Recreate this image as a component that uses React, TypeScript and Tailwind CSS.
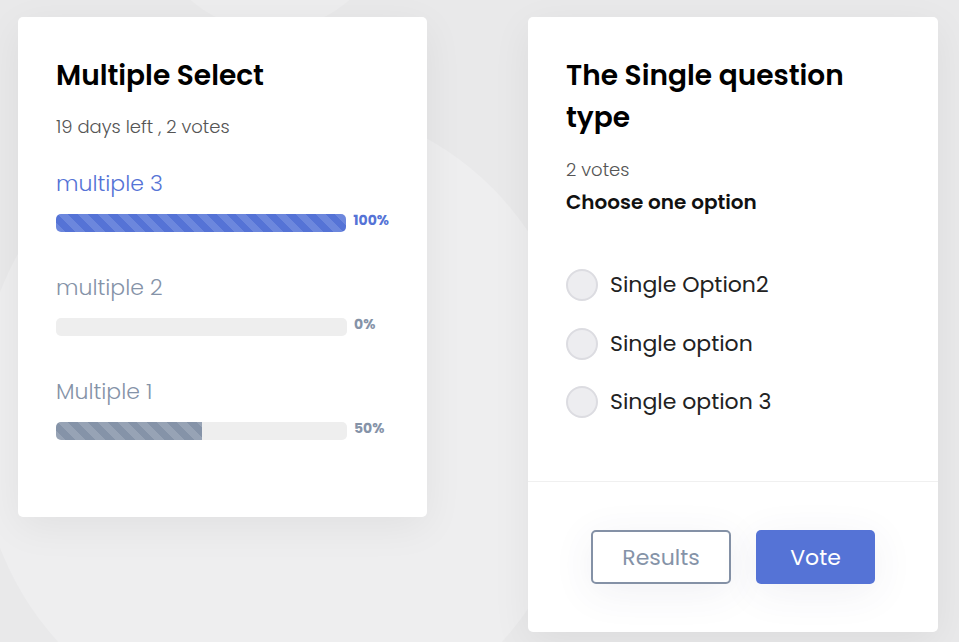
import React from "react";

const font = { fontFamily: "Poppins, 'Noto Sans', sans-serif" };

type Opt = { label: string; pct: number; tone: "blue" | "slate" };

const options: Opt[] = [
  { label: "multiple 3", pct: 100, tone: "blue" },
  { label: "multiple 2", pct: 0, tone: "slate" },
  { label: "Multiple 1", pct: 50, tone: "slate" },
];

function ResultRow({ opt }: { opt: Opt }) {
  const blue = opt.tone === "blue";
  return (
    <div className="flex flex-col">
      <div className={`text-[22px] font-light leading-[32px] ${blue ? "text-[#5573d6]" : "text-[#8593a8]"}`}>
        {opt.label}
      </div>
      <div className="mt-[14px] flex items-center">
        <div className="h-[18px] w-[291px] overflow-hidden rounded-[5px] bg-[#eeeeee]">
          <div
            className={`h-full ${
              blue
                ? "bg-[repeating-linear-gradient(45deg,#6c87dd_0px,#6c87dd_7px,#5573d6_7px,#5573d6_14px)]"
                : "bg-[repeating-linear-gradient(45deg,#97a3b5_0px,#97a3b5_7px,#8593a8_7px,#8593a8_14px)]"
            }`}
            style={{ width: `${opt.pct}%` }}
          />
        </div>
        <span
          className={`ml-[7px] -mt-[6px] text-[14px] font-bold leading-[20px] ${
            blue ? "text-[#5573d6]" : "text-[#8593a8]"
          }`}
        >
          {opt.pct}%
        </span>
      </div>
    </div>
  );
}

function Radio({ label }: { label: string }) {
  return (
    <label className="flex h-[32px] items-center gap-[12px]">
      <span className="h-[32px] w-[32px] shrink-0 rounded-full border-2 border-[#dcdce1] bg-[#ededf0]" />
      <span className="text-[22px] leading-[32px] text-[#222222]">{label}</span>
    </label>
  );
}

export default function App() {
  return (
    <div className="relative h-[642px] w-[959px] overflow-hidden bg-[#e9e9ea]" style={font}>
      {/* soft background shapes */}
      <div className="absolute left-[-20px] top-[100px] h-[640px] w-[600px] rounded-full bg-[#eeeeef]" />
      <div className="absolute left-[150px] top-[-300px] h-[330px] w-[240px] rounded-full bg-[#ededee]" />

      <div className="relative flex items-start gap-[101px] pl-[18px] pt-[17px]">
        <div className="w-[409px] rounded-[5px] bg-white px-[38px] pb-[77px] pt-[39px] shadow-[0_10px_40px_rgba(0,0,0,0.06)]">
          <h2 className="text-[28px] font-semibold leading-[40px] text-black">Multiple Select</h2>
          <p className="mt-[17px] text-[18px] font-light leading-[28px] text-[#555555]">19 days left , 2 votes</p>
          <div className="mt-[27px] flex flex-col gap-[40px]">
            {options.map((o) => (
              <ResultRow key={o.label} opt={o} />
            ))}
          </div>
        </div>

        <div className="flex h-[615px] w-[410px] flex-col rounded-[5px] bg-white shadow-[0_10px_40px_rgba(0,0,0,0.06)]">
          <div className="h-[464px] px-[38px] pt-[38px]">
            <h2 className="text-[28px] font-semibold leading-[42px] text-black">
              The Single question
              <br />
              type
            </h2>
            <p className="mt-[17px] text-[18px] font-light leading-[28px] text-[#555555]">2 votes</p>
            <p className="mt-[3px] text-[20px] font-semibold leading-[30px] text-[#111111]">Choose one option</p>
            <div className="mt-[52px] flex flex-col gap-[26.5px]">
              <Radio label="Single Option2" />
              <Radio label="Single option" />
              <Radio label="Single option 3" />
            </div>
          </div>
          <div className="flex flex-1 items-center justify-center gap-[25px] border-t border-[#f0f0f0]">
            <button className="h-[54px] w-[140px] rounded-[5px] border-[2.5px] border-[#8491a6] bg-white text-[22px] text-[#8593a8] shadow-[0_8px_40px_rgba(60,70,120,0.08)]">
              Results
            </button>
            <button className="h-[54px] w-[119px] rounded-[5px] bg-[#5573d6] text-[22px] text-white shadow-[0_8px_40px_rgba(60,70,120,0.08)]">
              Vote
            </button>
          </div>
        </div>
      </div>
    </div>
  );
}
